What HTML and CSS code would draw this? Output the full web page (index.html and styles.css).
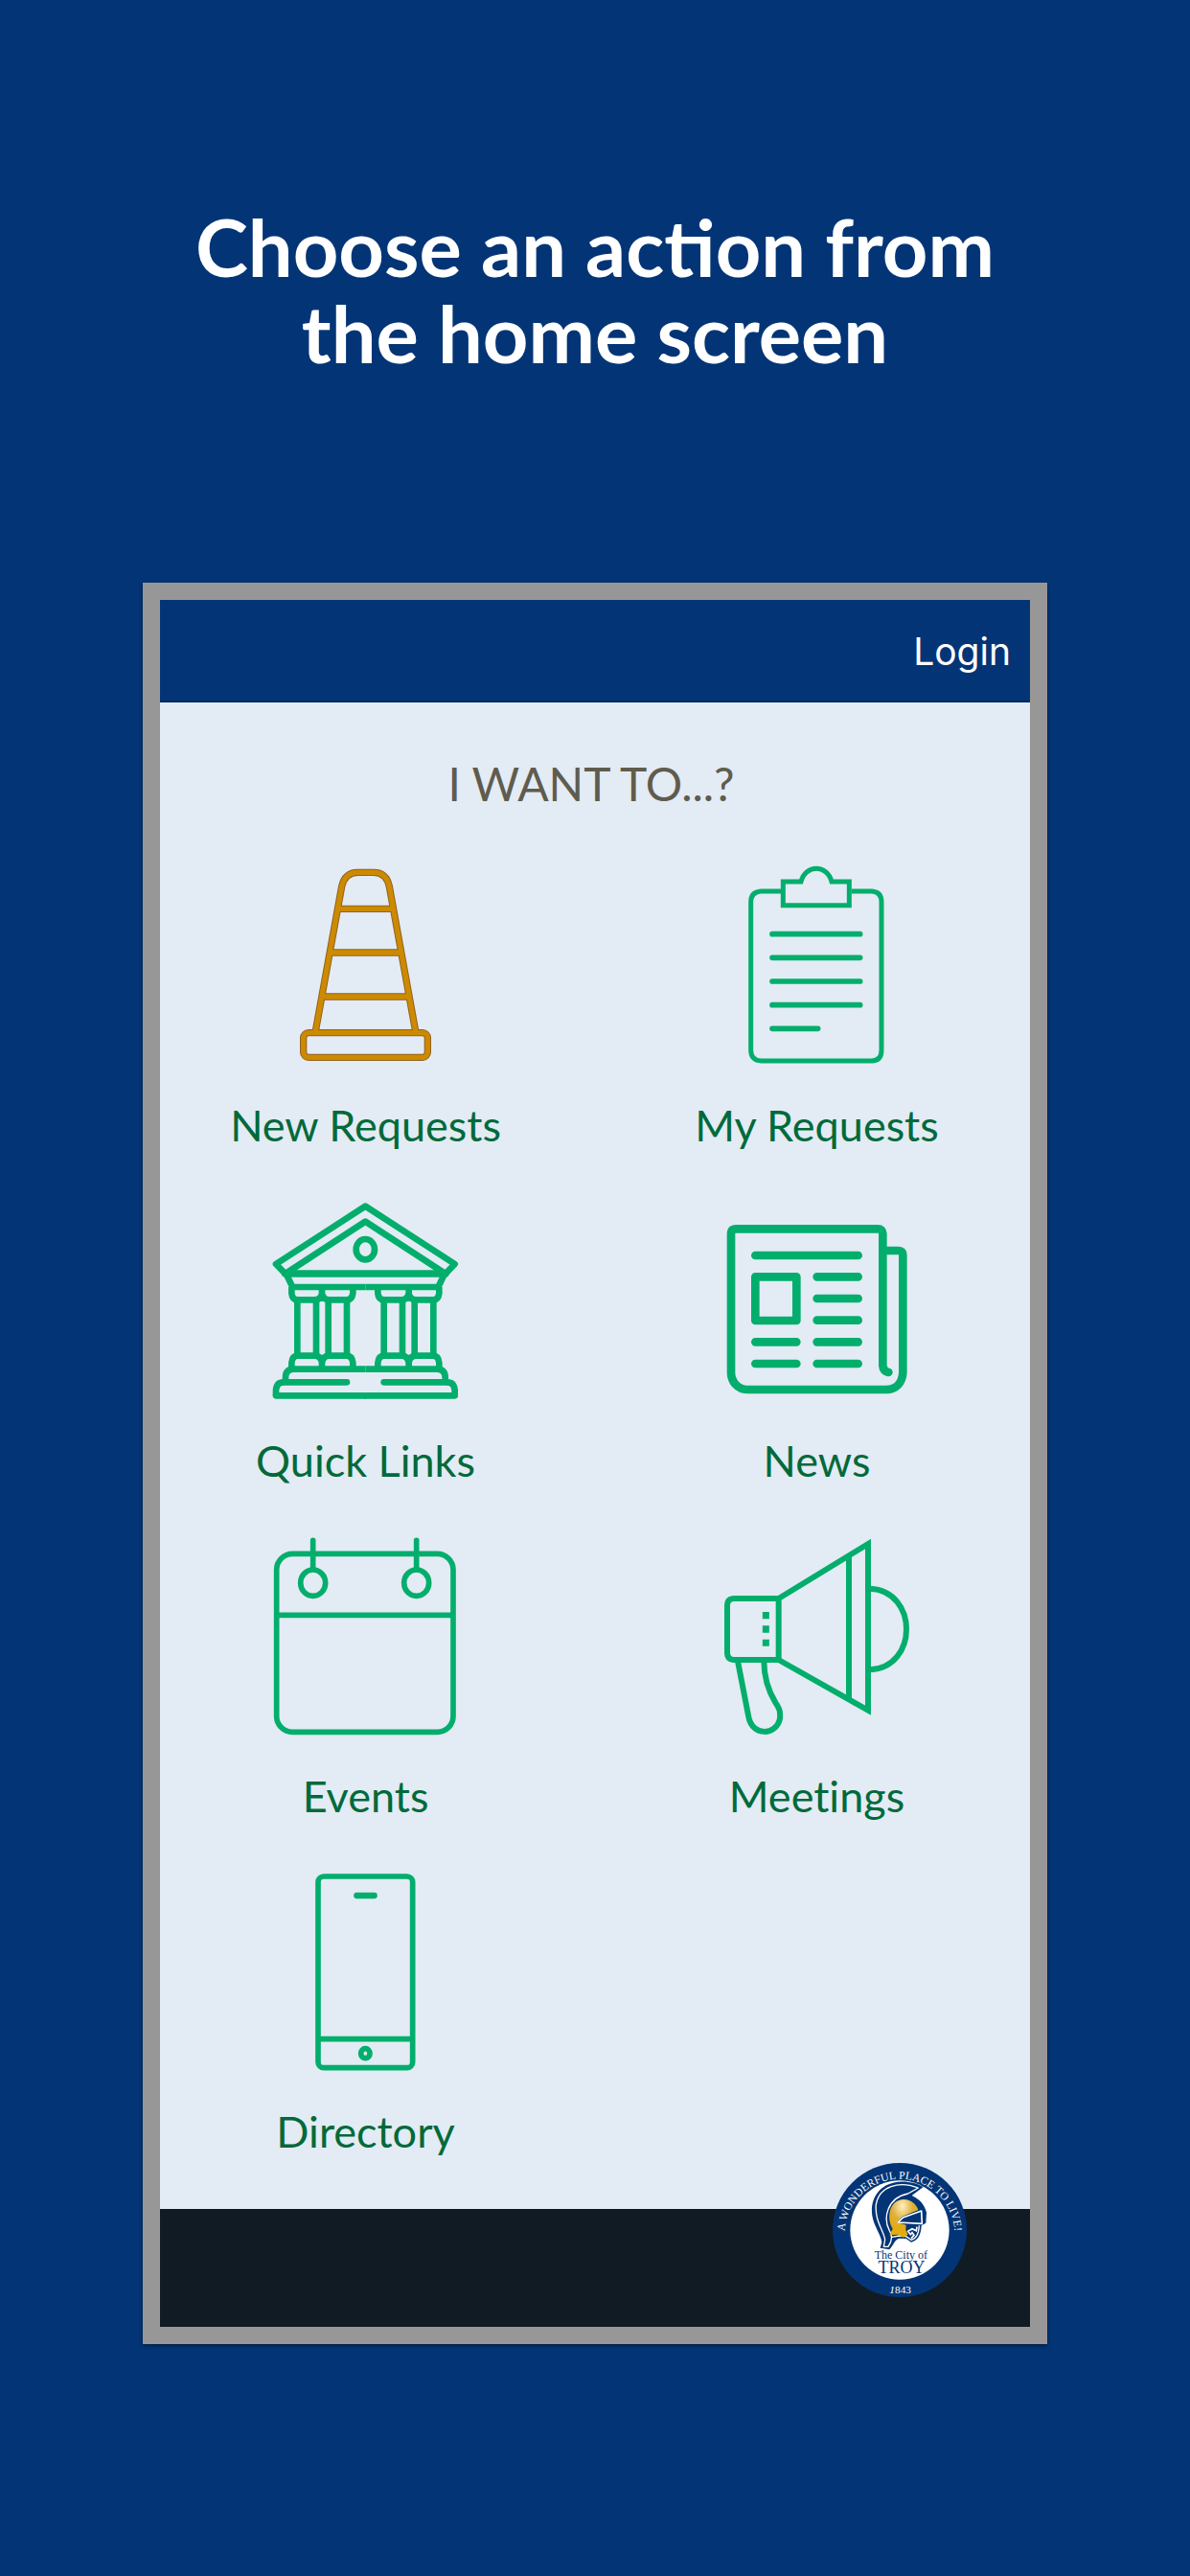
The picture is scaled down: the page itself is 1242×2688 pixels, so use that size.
FILE: index.html
```html
<!DOCTYPE html>
<html lang="en">
<head>
<meta charset="utf-8">
<meta name="viewport" content="width=device-width, initial-scale=1">
<title>City of Troy</title>
<link rel="stylesheet" href="styles.css">
</head>
<body>
<h1 class="headline">Choose an action from<br>the home screen</h1>
<div class="device">
  <header class="topbar"><a class="login" href="#login">Login</a></header>
  <main class="content">
    <h2 class="prompt">I WANT TO...?</h2>
    <nav class="actions" aria-label="Actions">
      <a class="action" href="#new-requests">
        <svg class="icon" viewBox="246 66 600 630" aria-hidden="true">
          <defs>
            <g id="cone">
              <path d="M388 588L470 135Q480 91 520 91H570Q610 91 619 135L701 588M463 205H627M438 342H652M413 480H677"/>
              <rect x="350" y="593" width="389" height="77" rx="16"/>
            </g>
          </defs>
          <use class="cone-edge" href="#cone"/>
          <use class="cone-fill" href="#cone"/>
        </svg>
        <span class="label">New Requests</span>
      </a>
      <a class="action" href="#my-requests">
        <svg class="icon" viewBox="216 66 600 630" stroke-width="15" aria-hidden="true">
          <path d="M405 150H343Q311 152 311 184V648Q312 680 343 681H690Q720 680 720 648V184Q720 152 690 150H627"/>
          <path d="M412 120H468C482 65 550 65 564 120H619V194H412Z"/>
          <path stroke-linecap="round" stroke-width="17" d="M378 284H653M378 358H653M378 432H653M378 506H653M378 580H521"/>
        </svg>
        <span class="label">My Requests</span>
      </a>
      <a class="action" href="#quick-links">
        <svg class="icon" viewBox="246 66 600 630" stroke-width="20" stroke-linejoin="round" aria-hidden="true">
          <defs>
            <g id="bank-half">
              <path d="M297 300L316 339H544"/>
              <path d="M313 339V358Q315 379 332 379H385Q406 379 408 358V339M408 358Q411 379 430 379H485Q503 379 505 358V339"/>
              <path d="M331 380V554M390 380V554M428 380V554M486 380V554"/>
              <path d="M313 594V577Q315 554 332 554H385Q406 554 408 577V594M408 577Q411 554 430 554H485Q503 554 505 577V594"/>
              <path d="M544 596H318Q294 598 294 622V636M264 679V662Q266 637 288 637"/>
              <path stroke-linecap="round" d="M288 637H486M544 679H264"/>
            </g>
          </defs>
          <path d="M544 86L824 267L796 296H292L264 267Z"/>
          <path d="M292 298L544 134L796 298Z"/>
          <use href="#bank-half"/>
          <use href="#bank-half" transform="translate(1088 0) scale(-1 1)"/>
          <ellipse cx="544" cy="221" rx="29" ry="32"/>
        </svg>
        <span class="label">Quick Links</span>
      </a>
      <a class="action" href="#news">
        <svg class="icon" viewBox="216 66 600 630" stroke-width="26" stroke-linecap="round" stroke-linejoin="round" aria-hidden="true">
          <path d="M724 225H774Q787 225 787 239V607C785 640 765 660 735 660H300C270 660 249 635 249 607V172Q250 157 264 157H708Q724 157 724 172V585Q726 603 742 606"/>
          <path d="M325 240H647M518 307H647M518 375H647M518 443H647M518 511H647M518 579H647M325 511H454M325 579H454"/>
          <rect x="325" y="307" width="129" height="137"/>
        </svg>
        <span class="label">News</span>
      </a>
      <a class="action" href="#events">
        <svg class="icon" viewBox="246 66 600 630" stroke-width="17" aria-hidden="true">
          <rect x="266" y="124" width="553" height="558" rx="50"/>
          <path d="M266 316H819"/>
          <path stroke-linecap="round" d="M380 82V170M704 82V170"/>
          <ellipse cx="380" cy="215" rx="39" ry="41"/>
          <ellipse cx="704" cy="215" rx="39" ry="41"/>
        </svg>
        <span class="label">Events</span>
      </a>
      <a class="action" href="#meetings">
        <svg class="icon" viewBox="216 66 600 630" stroke-width="18" aria-hidden="true">
          <path d="M398 264H258Q237 265 237 285V436Q238 455 258 456H398Z"/>
          <path d="M398 264L678 93V614L398 456M618 130V580"/>
          <path d="M684 233C836 240 836 480 684 487"/>
          <path d="M270 460L304 635C315 695 390 695 402 640C404 615 400 608 388 590Q352 530 352 460"/>
          <path stroke-width="21" d="M358 306V328M358 349V371M358 392V413"/>
        </svg>
        <span class="label">Meetings</span>
      </a>
      <a class="action" href="#directory">
        <svg class="icon" viewBox="246 66 600 630" stroke-width="17" aria-hidden="true">
          <rect x="396" y="84" width="296" height="599" rx="18"/>
          <path d="M396 593H692"/>
          <path stroke-linecap="round" stroke-width="19" d="M517 144H572"/>
          <ellipse cx="544" cy="638" rx="14" ry="15"/>
        </svg>
        <span class="label">Directory</span>
      </a>
    </nav>
  </main>
  <footer class="bottombar">
    <svg class="seal" viewBox="54 50 420 420" role="img" aria-label="The City of Troy seal">
      <circle cx="264" cy="260" r="210" fill="#033576"/>
      <circle cx="264" cy="260" r="155" fill="#fff"/>
      <path id="ring" fill="none" d="M92 290L92 272A172 172 0 0 1 436 272L436 290"/>
      <text class="seal-ring"><textPath href="#ring" startOffset="50%">A WONDERFUL PLACE TO LIVE!</textPath></text>
      <path fill="#033576" d="M338 125C310 108 258 100 222 120C182 142 170 185 180 225C188 255 206 278 208 298L203 316L232 321C245 306 248 290 262 286L284 287L300 298C322 294 331 272 332 246L346 238L348 205C342 180 326 163 302 152Z"/>
      <path fill="none" stroke="#fff" stroke-width="4" stroke-linejoin="round" d="M322 128C262 105 200 122 190 180C185 230 214 262 218 290L214 312L228 312C244 290 240 275 232 262C212 225 222 160 290 146Z"/>
      <path fill="none" stroke="#fff" stroke-width="4" d="M240 282L262 278L284 280L300 291C318 287 324 270 325 246"/>
      <path fill="url(#gold)" d="M233 204C238 172 268 156 295 168C312 176 320 190 322 197L272 218L256 236L284 244L283 260L290 274L275 283L258 274L232 276L242 256C232 240 230 222 233 204Z"/>
      <path fill="#033576" stroke="#fff" stroke-width="5" stroke-linejoin="round" d="M332 200L274 221L259 236L334 240Z"/>
      <path fill="none" stroke="#fff" stroke-width="5" d="M318 250L316 262L303 256L290 264L298 274L303 268L309 276L300 286"/>
      <text class="seal-city" x="268" y="350">The City of</text>
      <text class="seal-name" x="270" y="394">TROY</text>
      <text class="seal-year" x="266" y="457"><tspan font-style="italic">1</tspan>843</text>
      <defs>
        <radialGradient id="gold" cx="0.45" cy="0.18" r="0.6">
          <stop offset="0" stop-color="#fff0c0"/>
          <stop offset="0.6" stop-color="#dfb03a"/>
          <stop offset="1" stop-color="#e2ac10"/>
        </radialGradient>
      </defs>
    </svg>
  </footer>
</div>
</body>
</html>
```

FILE: styles.css
```css
* {
  box-sizing: border-box;
}

body {
  margin: 0;
  padding: 212px 0 240px;
  background: #033576;
  font-family: Lato, "Open Sans", sans-serif;
}

.headline {
  margin: 0 0 216px;
  color: #fff;
  font-size: 83px;
  font-weight: 700;
  line-height: 90px;
  text-align: center;
}

.device {
  margin: 0 12%;
  border: 18px solid #979797;
  box-shadow: 0 2px 4px rgba(0, 0, 0, 0.4);
}

.topbar {
  display: flex;
  align-items: center;
  justify-content: flex-end;
  height: 107px;
  padding: 2px 20px 0;
  background: #033576;
  border-bottom: 2px solid #02285f;
}

.login {
  color: #fff;
  font-family: Inter, sans-serif;
  font-size: 39px;
  line-height: 48px;
  text-decoration: none;
}

.content {
  padding: 53px 22px 51px 14px;
  background: #e3ebf5;
}

.prompt {
  margin: 0 0 52px;
  color: #5f5c4e;
  font-size: 48px;
  font-weight: 400;
  line-height: 64px;
  text-align: center;
}

.actions {
  display: grid;
  grid-template-columns: 1fr 1fr;
  gap: 48px 70px;
}

.action {
  display: flex;
  flex-direction: column;
  align-items: center;
  gap: 32px;
  color: #006a3a;
  text-decoration: none;
}

.icon {
  width: 200px;
  height: 210px;
  fill: none;
  stroke: #03ae6c;
}

.cone-edge {
  stroke: #95601f;
  stroke-width: 22px;
}

.cone-fill {
  stroke: #cc8a00;
  stroke-width: 16px;
}

.label {
  font-size: 45px;
  font-variant-ligatures: none;
  line-height: 60px;
  white-space: nowrap;
}

.bottombar {
  position: relative;
  height: 123px;
  background: #111b24;
}

.seal {
  position: absolute;
  top: -48px;
  right: 66px;
  width: 140px;
  height: 140px;
  font-family: "Liberation Serif", serif;
  text-anchor: middle;
}

.seal-ring {
  fill: #fff;
  font-size: 35px;
}

.seal-city {
  fill: #033576;
  font-size: 36px;
}

.seal-name {
  fill: #033576;
  font-size: 54px;
}

.seal-year {
  fill: #fff;
  font-size: 34px;
}
```
